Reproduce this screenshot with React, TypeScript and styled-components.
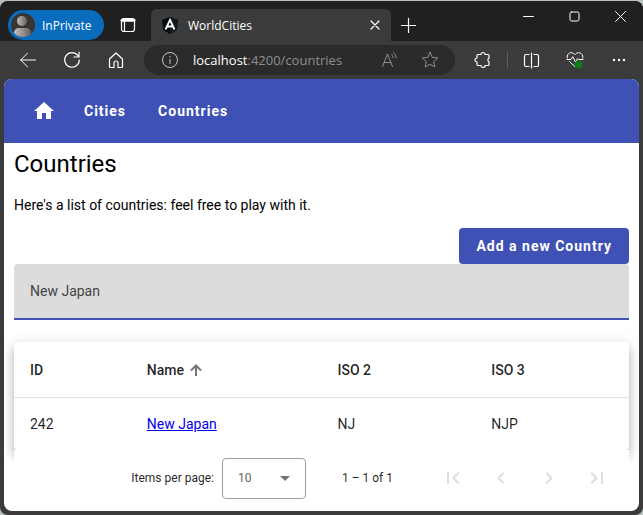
import React, { useState } from "react";
import styled, { createGlobalStyle } from "styled-components";

const color = {
  primary: "#3f51b5",
  strip: "#202020",
  chrome: "#3b3b3b",
  field: "#2b2b2b",
  text: "rgba(0, 0, 0, 0.87)",
};

const GlobalStyle = createGlobalStyle`
  *, *::before, *::after { box-sizing: border-box; }
  body {
    margin: 0;
    background: #b9c1be;
    font-family: Roboto, "Liberation Sans", sans-serif;
    font-size: 14px;
  }
  button, input, select { font: inherit; letter-spacing: inherit; }
`;

const BrowserWindow = styled.div`
  display: flex;
  flex-direction: column;
  min-height: calc(100vh - 1px);
  margin-top: 1px;
  background: ${color.chrome};
  border-radius: 8px;
  overflow: hidden;
  color: #fff;
`;

const TabStrip = styled.header`
  display: flex;
  align-items: flex-end;
  height: 40px;
  padding-left: 8px;
  background: ${color.strip};
  font-family: "Open Sans", "Noto Sans", sans-serif;
  font-size: 12px;
`;

const PlainButton = styled.button`
  display: inline-flex;
  align-items: center;
  justify-content: center;
  flex: none;
  padding: 0;
  border: 0;
  background: none;
  color: inherit;
`;

const Profile = styled(PlainButton)`
  width: 96px;
  height: 30px;
  margin-bottom: 1px;
  padding-left: 3px;
  justify-content: flex-start;
  gap: 7px;
  border-radius: 15px;
  background: #0a6cbd;
`;

const StripButton = styled(PlainButton)`
  width: 47px;
  height: 32px;
`;

const Tab = styled.div`
  display: flex;
  align-items: center;
  flex: 0 1 240px;
  height: 32px;
  padding: 0 6px 0 11px;
  gap: 10px;
  background: ${color.chrome};
  border-radius: 6px 6px 0 0;
`;

const TabTitle = styled.span`
  flex: 1;
`;

const TabClose = styled(PlainButton)`
  width: 20px;
  height: 20px;
`;

const NewTab = styled(PlainButton)`
  width: 34px;
  height: 32px;
`;

const WindowControls = styled.div`
  display: flex;
  align-self: flex-start;
  margin-left: auto;
`;

const WindowButton = styled(PlainButton)`
  width: 46px;
  height: 30px;
`;

const Toolbar = styled.div`
  display: flex;
  align-items: center;
  height: 38px;
  padding: 0 2px 0 6px;
  font-family: "Open Sans", "Noto Sans", sans-serif;
`;

const ToolButton = styled(PlainButton)`
  width: 44px;
  height: 30px;
`;

const AddressBar = styled.div`
  display: flex;
  align-items: center;
  flex: 1;
  height: 30px;
  margin: 0 6px;
  padding: 0 14px 0 17px;
  border-radius: 15px;
  background: ${color.field};
  color: #8f8f8f;
  font-size: 13px;
`;

const Url = styled.span`
  flex: 1;
  margin-left: 14px;
  strong { color: #fff; font-weight: 400; }
`;

const AddressButton = styled(PlainButton)`
  width: 22px;
  height: 22px;
  margin-left: 18px;
`;

const Divider = styled.span`
  width: 1px;
  height: 16px;
  margin: 0 1px 0 2px;
  background: #606060;
`;

const Page = styled.div`
  flex: 1;
  margin: 0 4px 4px;
  background: #fff;
  border-radius: 8px;
  overflow: hidden;
  color: #000;
`;

const NavBar = styled.nav`
  display: flex;
  align-items: center;
  height: 64px;
  padding: 0 16px;
  background: ${color.primary};
`;

const NavLink = styled.a`
  padding: 0 16px;
  color: #fff;
  font-weight: 700;
  letter-spacing: 1px;
  text-decoration: none;
`;

const HomeLink = styled.a`
  display: flex;
  padding: 0 12px;
  color: #fff;
`;

const Content = styled.main`
  padding: 0 10px;
`;

const Title = styled.h1`
  margin: 0;
  padding: 5px 0 0;
  font-size: 24px;
  line-height: 32px;
  font-weight: 400;
`;

const Intro = styled.p`
  margin: 15px 0 13px;
  line-height: 20px;
`;

const Actions = styled.div`
  display: flex;
  justify-content: flex-end;
`;

const AddButton = styled(PlainButton)`
  height: 36px;
  padding: 0 17px;
  border-radius: 4px;
  background: ${color.primary};
  color: #fff;
  font-weight: 700;
  letter-spacing: 1px;
`;

const FilterInput = styled.input`
  display: block;
  width: 100%;
  height: 56px;
  margin-bottom: 22px;
  padding: 0 16px;
  border: 0;
  border-bottom: 2px solid ${color.primary};
  border-radius: 4px 4px 0 0;
  background: #dcdcdc;
  color: #444;
  outline: none;
`;

const Table = styled.table`
  width: 100%;
  table-layout: fixed;
  border-spacing: 0;
  border-radius: 4px;
  background: #fff;
  box-shadow:
    0 5px 5px -3px rgba(0, 0, 0, 0.2),
    0 8px 10px 1px rgba(0, 0, 0, 0.14),
    0 3px 14px 2px rgba(0, 0, 0, 0.12);
  color: ${color.text};
`;

const HeadCell = styled.th<{ $share: number }>`
  width: ${(p) => p.$share}%;
  height: 56px;
  padding: 0 16px;
  border-bottom: 1px solid #e0e0e0;
  font-weight: 500;
  text-align: left;
`;

const SortButton = styled(PlainButton)`
  gap: 6px;
  font-weight: 500;
`;

const Cell = styled.td`
  height: 52px;
  padding: 0 16px;
  a { color: #0000ee; }
`;

const Paginator = styled.div`
  position: relative;
  display: flex;
  align-items: center;
  justify-content: flex-end;
  height: 56px;
  padding-right: 8px;
  background: #fff;
  color: ${color.text};
  font-size: 12px;
`;

const SizeSelect = styled.div`
  display: grid;
  align-items: center;
  width: 84px;
  height: 41px;
  margin-left: 8px;
  border: 1px solid #9e9e9e;
  border-radius: 4px;
  color: #666;
  > * { grid-area: 1 / 1; }
  svg { justify-self: end; margin-right: 15px; pointer-events: none; }
  select {
    width: 100%;
    height: 100%;
    padding: 0 15px;
    border: 0;
    background: none;
    color: inherit;
    appearance: none;
    outline: none;
  }
`;

const RangeLabel = styled.span`
  margin: 0 36px;
`;

const PageButton = styled(PlainButton)`
  width: 48px;
  height: 48px;
  color: #dedede;
`;

const Stroke = ({ size, children, width = 1 }: { size: number; children: React.ReactNode; width?: number }) => (
  <svg width={size} height={size} viewBox={`0 0 ${size} ${size}`} fill="none" stroke="currentColor" strokeWidth={width} strokeLinecap="round" strokeLinejoin="round" aria-hidden="true">
    {children}
  </svg>
);

const Glyph = ({ d, size = 24 }: { d: string; size?: number }) => (
  <svg width={size} height={size} viewBox="0 0 24 24" fill="currentColor" aria-hidden="true">
    <path d={d} />
  </svg>
);

const Avatar = () => (
  <svg width="24" height="24" viewBox="0 0 24 24" aria-hidden="true">
    <defs>
      <linearGradient id="person" x1="0" x2="1">
        <stop offset="0" stopColor="#c4c0be" />
        <stop offset="1" stopColor="#66615f" />
      </linearGradient>
      <clipPath id="disc"><circle cx="12" cy="12" r="12" /></clipPath>
    </defs>
    <g clipPath="url(#disc)">
      <rect width="24" height="24" fill="#383533" />
      <circle cx="11" cy="8" r="5" fill="url(#person)" />
      <path d="M3 24v-4c0-3 2-5 5-5h7c3 0 5 2 5 5v4z" fill="url(#person)" />
    </g>
  </svg>
);

const AngularLogo = () => (
  <svg width="16" height="17" viewBox="0 0 16 17" aria-hidden="true">
    <path d="M8 0l8 3-1.200 10L8 17l-6.800-4L0 3z" fill="#05090b" />
    <path d="M8 0l8 3-1.200 10L8 17z" fill="#10191d" />
    <path d="M3.500 12.500L8 2.800l4.500 9.700M5.300 9.500h5.400" fill="none" stroke="#fff" strokeWidth="1.800" />
  </svg>
);

const pageIcons: [string, string][] = [
  ["First page", "M18.410 16.590L13.820 12l4.590-4.590L17 6l-6 6 6 6zM6 6h2v12H6z"],
  ["Previous page", "M15.410 7.410L14 6l-6 6 6 6 1.410-1.410L10.830 12z"],
  ["Next page", "M10 6L8.590 7.410 13.170 12l-4.580 4.590L10 18l6-6z"],
  ["Last page", "M5.590 7.410L10.180 12l-4.590 4.590L7 18l6-6-6-6zM16 6h2v12h-2z"],
];

const countries = [{ id: 242, name: "New Japan", iso2: "NJ", iso3: "NJP" }];

export default function App() {
  const [filter, setFilter] = useState("New Japan");
  const [pageSize, setPageSize] = useState("10");

  return (
    <>
      <GlobalStyle />
      <BrowserWindow>
        <TabStrip>
          <Profile><Avatar />InPrivate</Profile>
          <StripButton aria-label="Tab actions">
            <Stroke size={16} width={1.2}>
              <rect x="1.500" y="1.500" width="13" height="13" rx="2.500" />
              <path d="M2 3.200h12" strokeWidth="3" />
              <path d="M4.500 4v10" />
            </Stroke>
          </StripButton>
          <Tab>
            <AngularLogo />
            <TabTitle>WorldCities</TabTitle>
            <TabClose aria-label="Close tab">
              <Stroke size={10} width={1.2}><path d="M1 1l8 8M9 1L1 9" /></Stroke>
            </TabClose>
          </Tab>
          <NewTab aria-label="New tab">
            <Stroke size={15} width={1.2}><path d="M7.500 .5v14M.5 7.500h14" /></Stroke>
          </NewTab>
          <WindowControls>
            <WindowButton aria-label="Minimize">
              <Stroke size={11}><path d="M.5 5.500h10" /></Stroke>
            </WindowButton>
            <WindowButton aria-label="Maximize">
              <Stroke size={11}><rect x="1" y="1" width="9" height="9" rx="1.500" /></Stroke>
            </WindowButton>
            <WindowButton aria-label="Close">
              <Stroke size={11}><path d="M.5 .5l10 10M10.500 .5l-10 10" /></Stroke>
            </WindowButton>
          </WindowControls>
        </TabStrip>

        <Toolbar>
          <ToolButton aria-label="Back">
            <Stroke size={16}><path d="M15.500 8H.7M7.500 1.200L.7 8l6.800 6.800" /></Stroke>
          </ToolButton>
          <ToolButton aria-label="Refresh">
            <Stroke size={18} width={1.2}><path d="M16.300 9A7.300 7.300 0 1 1 14.800 4.500L15.800 6M16 1v5h-5" /></Stroke>
          </ToolButton>
          <ToolButton aria-label="Home">
            <Stroke size={16} width={1.2}><path d="M1.500 7L8 1l6.500 6v7.500a1 1 0 0 1-1 1H10V11a2 2 0 0 0-4 0v4.500H2.500a1 1 0 0 1-1-1z" /></Stroke>
          </ToolButton>
          <AddressBar>
            <PlainButton aria-label="Site information">
              <svg width="18" height="18" viewBox="0 0 18 18" fill="none" stroke="#c8c8c8" aria-hidden="true">
                <circle cx="9" cy="9" r="7.500" />
                <path d="M9 8v5M9 5v1.500" />
              </svg>
            </PlainButton>
            <Url><strong>localhost</strong>:4200/countries</Url>
            <AddressButton aria-label="Read aloud">
              <Stroke size={18}><path d="M1.500 15.500L6.500 3l5 12.500M3.300 11.500h6.400M10.500 3.500c1 .8 1.500 1.900 1.500 3.200M12.200 1.500c1.900 1.500 2.800 3.200 2.800 5.500" /></Stroke>
            </AddressButton>
            <AddressButton aria-label="Add to favorites">
              <Stroke size={18}><path d="M9 1.300l2.300 5 5.400.6-4 3.700 1.100 5.400L9 13.300 4.200 16l1.100-5.400-4-3.700 5.400-.6z" /></Stroke>
            </AddressButton>
          </AddressBar>
          <ToolButton aria-label="Extensions">
            <Stroke size={18} width={1.2}><path d="M4 3.500h3a2 2 0 0 1 4 0h3a1 1 0 0 1 1 1v2.700a2 2 0 0 0 0 3.600v2.700a1 1 0 0 1-1 1h-3a2 2 0 0 1-4 0H4a1 1 0 0 1-1-1V11a2 2 0 0 1 0-4V4.500a1 1 0 0 1 1-1z" /></Stroke>
          </ToolButton>
          <Divider />
          <ToolButton aria-label="Split screen">
            <Stroke size={17} width={1.2}><path d="M8.500 1v15M6 2.500H3a1.500 1.500 0 0 0-1.500 1.500v9A1.500 1.500 0 0 0 3 14.500h3M11 2.500h3a1.500 1.500 0 0 1 1.500 1.500v9a1.500 1.500 0 0 1-1.500 1.500h-3" /></Stroke>
          </ToolButton>
          <ToolButton aria-label="Browser essentials">
            <Stroke size={18}>
              <path d="M1.300 7C.6 4 2.700 1.700 5.200 1.700c1.700 0 2.700.8 3.800 2 1.100-1.200 2.100-2 3.800-2 2.500 0 4.600 2.300 3.900 5.300M3.500 10.500L9 15.700l3-2.700M1 8.500h4l1.800-2.800L9.500 11l2-3.500 1 1H17" />
              <circle cx="12.500" cy="13.500" r="4" fill="#0f7b1c" stroke="none" />
            </Stroke>
          </ToolButton>
          <ToolButton aria-label="Settings and more">
            <svg width="16" height="4" viewBox="0 0 16 4" fill="currentColor" aria-hidden="true">
              <circle cx="3" cy="2" r="1.200" /><circle cx="8" cy="2" r="1.200" /><circle cx="13" cy="2" r="1.200" />
            </svg>
          </ToolButton>
        </Toolbar>

        <Page>
          <NavBar>
            <HomeLink href="#home" aria-label="Home"><Glyph d="M10 20v-6h4v6h5v-8h3L12 3 2 12h3v8z" /></HomeLink>
            <NavLink href="#cities">Cities</NavLink>
            <NavLink href="#countries">Countries</NavLink>
          </NavBar>
          <Content>
            <Title>Countries</Title>
            <Intro>Here's a list of countries: feel free to play with it.</Intro>
            <Actions><AddButton>Add a new Country</AddButton></Actions>
            <FilterInput aria-label="Filter by name" value={filter} onChange={(e) => setFilter(e.target.value)} />
            <Table>
              <thead>
                <tr>
                  <HeadCell $share={19}>ID</HeadCell>
                  <HeadCell $share={31} aria-sort="ascending">
                    <SortButton>
                      Name
                      <svg width="12" height="12" viewBox="0 0 12 12" fill="none" stroke="#757575" strokeWidth="2" aria-hidden="true">
                        <path d="M6 12V1.500M1 6.500l5-5 5 5" />
                      </svg>
                    </SortButton>
                  </HeadCell>
                  <HeadCell $share={25}>ISO 2</HeadCell>
                  <HeadCell $share={25}>ISO 3</HeadCell>
                </tr>
              </thead>
              <tbody>
                {countries.map((c) => (
                  <tr key={c.id}>
                    <Cell>{c.id}</Cell>
                    <Cell><a href={`#country/${c.id}`}>{c.name}</a></Cell>
                    <Cell>{c.iso2}</Cell>
                    <Cell>{c.iso3}</Cell>
                  </tr>
                ))}
              </tbody>
            </Table>
            <Paginator>
              <label htmlFor="page-size">Items per page:</label>
              <SizeSelect>
                <select id="page-size" value={pageSize} onChange={(e) => setPageSize(e.target.value)}>
                  <option>10</option>
                  <option>20</option>
                  <option>50</option>
                </select>
                <svg width="10" height="5" viewBox="0 0 10 5" fill="#757575" aria-hidden="true"><path d="M0 0h10L5 5z" /></svg>
              </SizeSelect>
              <RangeLabel>1 – 1 of 1</RangeLabel>
              {pageIcons.map(([label, d]) => (
                <PageButton key={label} aria-label={label} disabled><Glyph d={d} /></PageButton>
              ))}
            </Paginator>
          </Content>
        </Page>
      </BrowserWindow>
    </>
  );
}
